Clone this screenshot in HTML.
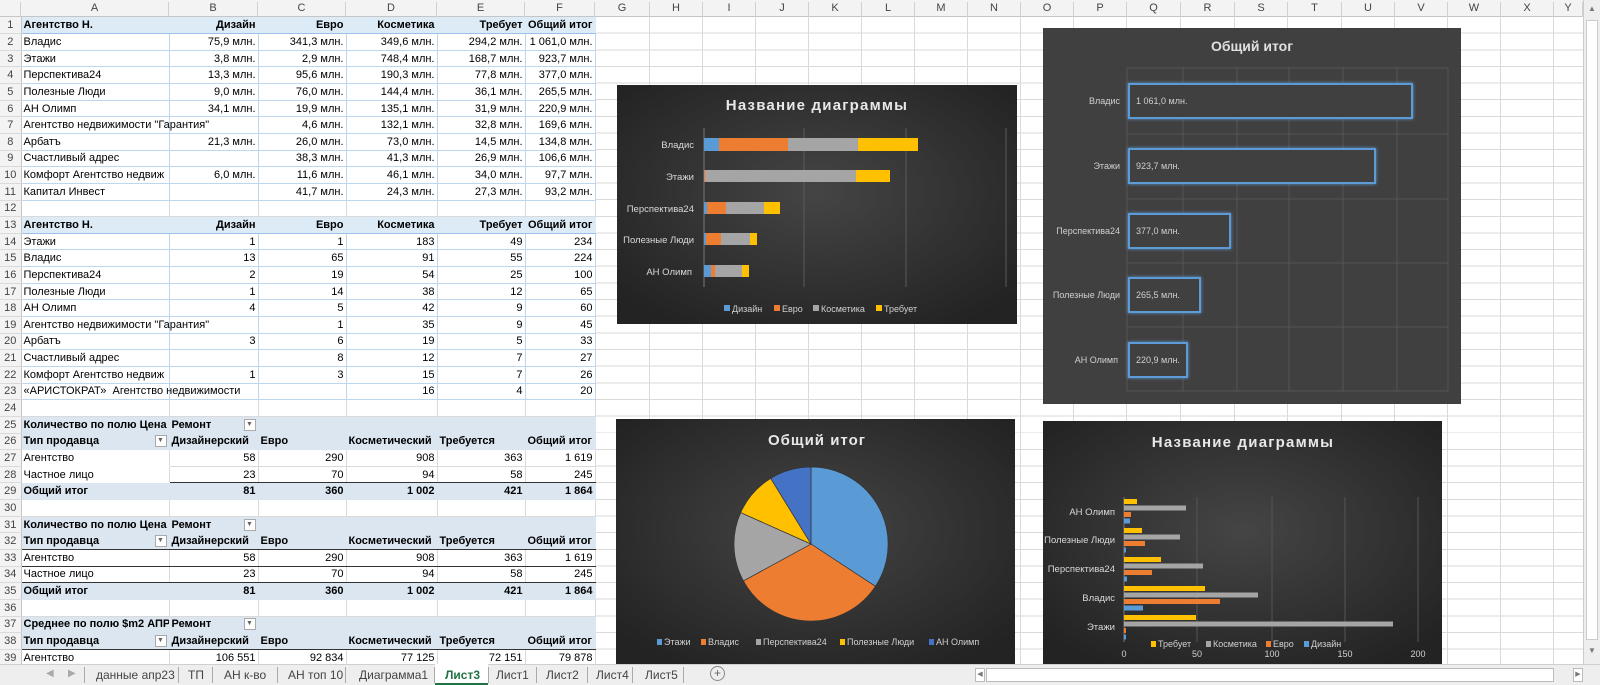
<!DOCTYPE html>
<html><head><meta charset="utf-8"><style>
*{margin:0;padding:0;box-sizing:border-box}
body{width:1600px;height:685px;overflow:hidden;background:#fff;font-family:"Liberation Sans","DejaVu Sans",sans-serif;font-size:11px;color:#000;position:relative}
#colhdr{position:absolute;left:0;top:0;width:1583px;height:17px;background:#f3f3f3;border-bottom:1px solid #c6c6c6}
#colhdr span{position:absolute;top:2px;text-align:center;color:#444;font-size:11px;border-right:1px solid #d0d0d0;height:15px}
#grid{position:absolute;left:595px;top:17px;width:988px;height:647px;background:repeating-linear-gradient(to bottom,transparent 0,transparent 15.65px,#dadada 15.65px,#dadada 16.65px)}
.vl{position:absolute;top:17px;height:647px;width:1px;background:#dadada}
table{position:absolute;left:0;top:17px;border-collapse:collapse;table-layout:fixed;width:595px}
td{height:16.65px;padding:0 2px;border-right:1px solid #dadada;border-bottom:1px solid #dadada;white-space:nowrap;overflow:visible;text-align:right;line-height:14px;font-size:11px}
td:first-child{background:#f3f3f3;color:#444;text-align:center;border-right:1px solid #c6c6c6;padding:0}
td.l{text-align:left}
.h td:not(:first-child){background:#ddebf7;font-weight:bold;border-bottom:1px solid #9bc2e6;border-right-color:#ddebf7}
.t td:not(:first-child){border-bottom:1px solid #bdd7ee;border-right:1px solid #bdd7ee}
.p td:not(:first-child){background:#dce6f1;font-weight:bold;border-right-color:#dce6f1;border-bottom-color:#dce6f1}
.pb td:not(:first-child){border-bottom:1px solid #333}
.pv td:not(:first-child):not(:nth-child(2)){border-left:1px solid #333}
.ov{overflow:visible;position:relative;z-index:2}
.dd{display:inline-block;width:12px;height:12px;border:1px solid #aaa;background:#fff;vertical-align:middle;float:right;margin-top:1px;font-size:7px;line-height:10px;text-align:center;color:#666;font-weight:normal}
#tabs{position:absolute;left:0;top:664px;width:1600px;height:21px;background:#eeeeee;border-top:1px solid #cfcfcf;font-size:12px;color:#444}
#tabs span{position:absolute;top:3px}
.sep{position:absolute;top:2px;width:1px;height:16px;background:#aaa}
#vs{position:absolute;left:1583px;top:0;width:17px;height:664px;background:#eee;border-left:1px solid #ccc}
</style></head><body>
<div id="colhdr">
<span style="left:0;width:21px"></span>
<span style="left:21px;width:148px">A</span><span style="left:169px;width:89px">B</span><span style="left:258px;width:88px">C</span><span style="left:346px;width:91px">D</span><span style="left:437px;width:88px">E</span><span style="left:525px;width:70px">F</span>
<span style="left:595px;width:55px">G</span><span style="left:650px;width:53px">H</span><span style="left:703px;width:53px">I</span><span style="left:756px;width:53px">J</span><span style="left:809px;width:53px">K</span><span style="left:862px;width:53px">L</span><span style="left:915px;width:53px">M</span><span style="left:968px;width:53px">N</span><span style="left:1021px;width:53px">O</span><span style="left:1074px;width:53px">P</span><span style="left:1127px;width:54px">Q</span><span style="left:1181px;width:54px">R</span><span style="left:1235px;width:53px">S</span><span style="left:1288px;width:54px">T</span><span style="left:1342px;width:53px">U</span><span style="left:1395px;width:53px">V</span><span style="left:1448px;width:53px">W</span><span style="left:1501px;width:53px">X</span><span style="left:1554px;width:29px">Y</span>
</div>
<div id="grid"></div>
<div class="vl" style="left:649px"></div><div class="vl" style="left:702px"></div><div class="vl" style="left:755px"></div><div class="vl" style="left:808px"></div><div class="vl" style="left:861px"></div><div class="vl" style="left:914px"></div><div class="vl" style="left:967px"></div><div class="vl" style="left:1020px"></div><div class="vl" style="left:1073px"></div><div class="vl" style="left:1126px"></div><div class="vl" style="left:1180px"></div><div class="vl" style="left:1234px"></div><div class="vl" style="left:1287px"></div><div class="vl" style="left:1341px"></div><div class="vl" style="left:1394px"></div><div class="vl" style="left:1447px"></div><div class="vl" style="left:1500px"></div><div class="vl" style="left:1553px"></div>
<table>
<colgroup><col style="width:21px"><col style="width:148px"><col style="width:89px"><col style="width:88px"><col style="width:91px"><col style="width:88px"><col style="width:70px"></colgroup>
<tr class="h"><td>1</td><td class="l">Агентство Н.</td><td>Дизайн</td><td>Евро</td><td>Косметика</td><td>Требует</td><td>Общий итог</td></tr>
<tr class="t"><td>2</td><td class="l">Владис</td><td>75,9 млн.</td><td>341,3 млн.</td><td>349,6 млн.</td><td>294,2 млн.</td><td>1 061,0 млн.</td></tr>
<tr class="t"><td>3</td><td class="l">Этажи</td><td>3,8 млн.</td><td>2,9 млн.</td><td>748,4 млн.</td><td>168,7 млн.</td><td>923,7 млн.</td></tr>
<tr class="t"><td>4</td><td class="l">Перспектива24</td><td>13,3 млн.</td><td>95,6 млн.</td><td>190,3 млн.</td><td>77,8 млн.</td><td>377,0 млн.</td></tr>
<tr class="t"><td>5</td><td class="l">Полезные Люди</td><td>9,0 млн.</td><td>76,0 млн.</td><td>144,4 млн.</td><td>36,1 млн.</td><td>265,5 млн.</td></tr>
<tr class="t"><td>6</td><td class="l">АН Олимп</td><td>34,1 млн.</td><td>19,9 млн.</td><td>135,1 млн.</td><td>31,9 млн.</td><td>220,9 млн.</td></tr>
<tr class="t"><td>7</td><td class="l ov">Агентство недвижимости "Гарантия"</td><td></td><td>4,6 млн.</td><td>132,1 млн.</td><td>32,8 млн.</td><td>169,6 млн.</td></tr>
<tr class="t"><td>8</td><td class="l">Арбатъ</td><td>21,3 млн.</td><td>26,0 млн.</td><td>73,0 млн.</td><td>14,5 млн.</td><td>134,8 млн.</td></tr>
<tr class="t"><td>9</td><td class="l">Счастливый адрес</td><td></td><td>38,3 млн.</td><td>41,3 млн.</td><td>26,9 млн.</td><td>106,6 млн.</td></tr>
<tr class="t"><td>10</td><td class="l" style="overflow:hidden">Комфорт Агентство недвиж</td><td>6,0 млн.</td><td>11,6 млн.</td><td>46,1 млн.</td><td>34,0 млн.</td><td>97,7 млн.</td></tr>
<tr class="t"><td>11</td><td class="l">Капитал Инвест</td><td></td><td>41,7 млн.</td><td>24,3 млн.</td><td>27,3 млн.</td><td>93,2 млн.</td></tr>
<tr><td>12</td><td></td><td></td><td></td><td></td><td></td><td></td></tr>
<tr class="h"><td>13</td><td class="l">Агентство Н.</td><td>Дизайн</td><td>Евро</td><td>Косметика</td><td>Требует</td><td>Общий итог</td></tr>
<tr class="t"><td>14</td><td class="l">Этажи</td><td>1</td><td>1</td><td>183</td><td>49</td><td>234</td></tr>
<tr class="t"><td>15</td><td class="l">Владис</td><td>13</td><td>65</td><td>91</td><td>55</td><td>224</td></tr>
<tr class="t"><td>16</td><td class="l">Перспектива24</td><td>2</td><td>19</td><td>54</td><td>25</td><td>100</td></tr>
<tr class="t"><td>17</td><td class="l">Полезные Люди</td><td>1</td><td>14</td><td>38</td><td>12</td><td>65</td></tr>
<tr class="t"><td>18</td><td class="l">АН Олимп</td><td>4</td><td>5</td><td>42</td><td>9</td><td>60</td></tr>
<tr class="t"><td>19</td><td class="l ov">Агентство недвижимости "Гарантия"</td><td></td><td>1</td><td>35</td><td>9</td><td>45</td></tr>
<tr class="t"><td>20</td><td class="l">Арбатъ</td><td>3</td><td>6</td><td>19</td><td>5</td><td>33</td></tr>
<tr class="t"><td>21</td><td class="l">Счастливый адрес</td><td></td><td>8</td><td>12</td><td>7</td><td>27</td></tr>
<tr class="t"><td>22</td><td class="l" style="overflow:hidden">Комфорт Агентство недвиж</td><td>1</td><td>3</td><td>15</td><td>7</td><td>26</td></tr>
<tr class="t"><td>23</td><td class="l ov">«АРИСТОКРАТ»&nbsp; Агентство недвижимости</td><td></td><td></td><td>16</td><td>4</td><td>20</td></tr>
<tr><td>24</td><td></td><td></td><td></td><td></td><td></td><td></td></tr>
<tr class="p"><td>25</td><td class="l">Количество по полю Цена</td><td class="l">Ремонт <span class="dd">▼</span></td><td></td><td></td><td></td><td></td></tr>
<tr class="p pv"><td>26</td><td class="l">Тип продавца <span class="dd">▼</span></td><td class="l">Дизайнерский</td><td class="l">Евро</td><td class="l">Косметический</td><td class="l">Требуется</td><td class="l">Общий итог</td></tr>
<tr class="pv"><td>27</td><td class="l" style="border-bottom-color:#fff">Агентство</td><td>58</td><td>290</td><td>908</td><td>363</td><td>1 619</td></tr>
<tr class="pv pb"><td>28</td><td class="l" style="border-bottom-color:#fff">Частное лицо</td><td>23</td><td>70</td><td>94</td><td>58</td><td>245</td></tr>
<tr class="p pv"><td>29</td><td class="l">Общий итог</td><td>81</td><td>360</td><td>1 002</td><td>421</td><td>1 864</td></tr>
<tr><td>30</td><td></td><td></td><td></td><td></td><td></td><td></td></tr>
<tr class="p"><td>31</td><td class="l">Количество по полю Цена</td><td class="l">Ремонт <span class="dd">▼</span></td><td></td><td></td><td></td><td></td></tr>
<tr class="p pv pb"><td>32</td><td class="l">Тип продавца <span class="dd">▼</span></td><td class="l">Дизайнерский</td><td class="l">Евро</td><td class="l">Косметический</td><td class="l">Требуется</td><td class="l">Общий итог</td></tr>
<tr class="pv pb"><td>33</td><td class="l">Агентство</td><td>58</td><td>290</td><td>908</td><td>363</td><td>1 619</td></tr>
<tr class="pv pb"><td>34</td><td class="l">Частное лицо</td><td>23</td><td>70</td><td>94</td><td>58</td><td>245</td></tr>
<tr class="p pv"><td>35</td><td class="l">Общий итог</td><td>81</td><td>360</td><td>1 002</td><td>421</td><td>1 864</td></tr>
<tr><td>36</td><td></td><td></td><td></td><td></td><td></td><td></td></tr>
<tr class="p"><td>37</td><td class="l" style="overflow:hidden">Среднее по полю $m2 АПР</td><td class="l">Ремонт <span class="dd">▼</span></td><td></td><td></td><td></td><td></td></tr>
<tr class="p pv pb"><td>38</td><td class="l">Тип продавца <span class="dd">▼</span></td><td class="l">Дизайнерский</td><td class="l">Евро</td><td class="l">Косметический</td><td class="l">Требуется</td><td class="l">Общий итог</td></tr>
<tr class="pv"><td>39</td><td class="l">Агентство</td><td>106 551</td><td>92 834</td><td>77 125</td><td>72 151</td><td>79 878</td></tr>
</table>

<svg width="1600" height="685" style="position:absolute;left:0;top:0" font-family="Liberation Sans, DejaVu Sans, sans-serif">
<defs>
<radialGradient id="rg" cx="50%" cy="45%" r="65%"><stop offset="0" stop-color="#454545"/><stop offset="1" stop-color="#232323"/></radialGradient>
<filter id="glow" x="-10%" y="-30%" width="120%" height="160%"><feGaussianBlur stdDeviation="1.5" result="b"/><feMerge><feMergeNode in="b"/><feMergeNode in="SourceGraphic"/></feMerge></filter>
</defs>
<!-- Chart 1 -->
<rect x="617" y="85" width="400" height="239" fill="url(#rg)"/>
<text x="817" y="110" fill="#e8e8e8" font-size="15" font-weight="bold" text-anchor="middle" letter-spacing="1.2">Название диаграммы</text>
<g stroke="#5a5a5a" stroke-width="1"><line x1="704" y1="128" x2="704" y2="287" stroke="#777"/><line x1="804" y1="128" x2="804" y2="287"/><line x1="906" y1="128" x2="906" y2="287"/><line x1="1006" y1="128" x2="1006" y2="287"/></g>
<g fill="#d9d9d9" font-size="9.5" text-anchor="end">
<text x="694" y="148">Владис</text><text x="694" y="180">Этажи</text><text x="694" y="212">Перспектива24</text><text x="694" y="243">Полезные Люди</text><text x="692" y="275">АН Олимп</text></g>
<rect x="704" y="138" width="15" height="13" fill="#5b9bd5"/><rect x="719" y="138" width="69" height="13" fill="#ed7d31"/><rect x="788" y="138" width="70" height="13" fill="#a5a5a5"/><rect x="858" y="138" width="60" height="13" fill="#ffc000"/>
<rect x="704" y="170" width="1" height="12" fill="#ed7d31"/><rect x="705" y="170" width="151" height="12" fill="#a5a5a5"/><rect x="856" y="170" width="34" height="12" fill="#ffc000"/>
<rect x="704" y="202" width="3" height="12" fill="#5b9bd5"/><rect x="707" y="202" width="19" height="12" fill="#ed7d31"/><rect x="726" y="202" width="38" height="12" fill="#a5a5a5"/><rect x="764" y="202" width="16" height="12" fill="#ffc000"/>
<rect x="704" y="233" width="2" height="12" fill="#5b9bd5"/><rect x="706" y="233" width="15" height="12" fill="#ed7d31"/><rect x="721" y="233" width="29" height="12" fill="#a5a5a5"/><rect x="750" y="233" width="7" height="12" fill="#ffc000"/>
<rect x="704" y="265" width="7" height="12" fill="#5b9bd5"/><rect x="711" y="265" width="4" height="12" fill="#ed7d31"/><rect x="715" y="265" width="27" height="12" fill="#a5a5a5"/><rect x="742" y="265" width="7" height="12" fill="#ffc000"/>
<g font-size="9" fill="#d0d0d0"><rect x="724" y="305" width="6" height="6" fill="#5b9bd5"/><text x="732" y="312">Дизайн</text><rect x="774" y="305" width="6" height="6" fill="#ed7d31"/><text x="782" y="312">Евро</text><rect x="813" y="305" width="6" height="6" fill="#a5a5a5"/><text x="821" y="312">Косметика</text><rect x="876" y="305" width="6" height="6" fill="#ffc000"/><text x="884" y="312">Требует</text></g>

<!-- Chart 2 -->
<rect x="1043" y="28" width="418" height="376" fill="#404040"/>
<text x="1252" y="51" fill="#e0e0e0" font-size="14" font-weight="bold" text-anchor="middle">Общий итог</text>
<g stroke="#555" stroke-width="1">
<line x1="1127" y1="68" x2="1448" y2="68"/><line x1="1127" y1="134" x2="1448" y2="134"/><line x1="1127" y1="199" x2="1448" y2="199"/><line x1="1127" y1="263" x2="1448" y2="263"/><line x1="1127" y1="327" x2="1448" y2="327"/><line x1="1127" y1="391" x2="1448" y2="391"/>
<line x1="1127" y1="68" x2="1127" y2="391"/><line x1="1183" y1="68" x2="1183" y2="391"/><line x1="1237" y1="68" x2="1237" y2="391"/><line x1="1289" y1="68" x2="1289" y2="391"/><line x1="1343" y1="68" x2="1343" y2="391"/><line x1="1397" y1="68" x2="1397" y2="391"/><line x1="1448" y1="68" x2="1448" y2="391"/></g>
<g fill="#404040" stroke="#5b9bd5" stroke-width="2" filter="url(#glow)">
<rect x="1129" y="84" width="283" height="34"/><rect x="1129" y="149" width="246" height="34"/><rect x="1129" y="214" width="101" height="34"/><rect x="1129" y="278" width="71" height="34"/><rect x="1129" y="343" width="58" height="34"/></g>
<g fill="#d0d0d0" font-size="9"><text x="1136" y="104">1 061,0 млн.</text><text x="1136" y="169">923,7 млн.</text><text x="1136" y="234">377,0 млн.</text><text x="1136" y="298">265,5 млн.</text><text x="1136" y="363">220,9 млн.</text></g>
<g fill="#d0d0d0" font-size="9" text-anchor="end"><text x="1120" y="104">Владис</text><text x="1120" y="169">Этажи</text><text x="1120" y="234">Перспектива24</text><text x="1120" y="298">Полезные Люди</text><text x="1118" y="363">АН Олимп</text></g>

<!-- Pie -->
<rect x="616" y="419" width="399" height="245" fill="url(#rg)"/>
<text x="817" y="445" fill="#e8e8e8" font-size="15" font-weight="bold" text-anchor="middle" letter-spacing="1">Общий итог</text>
<g stroke="#333" stroke-width="0.7">
<path d="M811,544 L811,467 A77,77 0 0 1 875.4,586.3 Z" fill="#5b9bd5"/>
<path d="M811,544 L875.4,586.3 A77,77 0 0 1 743.4,580.9 Z" fill="#ed7d31"/>
<path d="M811,544 L743.4,580.9 A77,77 0 0 1 740.7,512.6 Z" fill="#a5a5a5"/>
<path d="M811,544 L740.7,512.6 A77,77 0 0 1 770.7,478.4 Z" fill="#ffc000"/>
<path d="M811,544 L770.7,478.4 A77,77 0 0 1 811,467 Z" fill="#4472c4"/></g>
<g font-size="9" fill="#d0d0d0"><rect x="657" y="639" width="5" height="6" fill="#5b9bd5"/><text x="664" y="645">Этажи</text><rect x="701" y="639" width="5" height="6" fill="#ed7d31"/><text x="708" y="645">Владис</text><rect x="756" y="639" width="5" height="6" fill="#a5a5a5"/><text x="763" y="645">Перспектива24</text><rect x="840" y="639" width="5" height="6" fill="#ffc000"/><text x="847" y="645">Полезные Люди</text><rect x="929" y="639" width="5" height="6" fill="#4472c4"/><text x="936" y="645">АН Олимп</text></g>

<!-- Chart 4 -->
<rect x="1043" y="421" width="399" height="243" fill="url(#rg)"/>
<text x="1243" y="447" fill="#e8e8e8" font-size="15" font-weight="bold" text-anchor="middle" letter-spacing="1.2">Название диаграммы</text>
<g stroke="#555"><line x1="1197" y1="497" x2="1197" y2="642"/><line x1="1272" y1="497" x2="1272" y2="642"/><line x1="1345" y1="497" x2="1345" y2="642"/><line x1="1418" y1="497" x2="1418" y2="642"/><line x1="1124" y1="497" x2="1124" y2="642" stroke="#777"/></g>
<g fill="#d9d9d9" font-size="9.5" text-anchor="end"><text x="1115" y="515">АН Олимп</text><text x="1115" y="543">Полезные Люди</text><text x="1115" y="572">Перспектива24</text><text x="1115" y="601">Владис</text><text x="1115" y="630">Этажи</text></g>
<g>
<rect x="1124" y="499" width="13" height="5" fill="#ffc000"/><rect x="1124" y="505.5" width="62" height="5" fill="#a5a5a5"/><rect x="1124" y="512" width="7" height="5" fill="#ed7d31"/><rect x="1124" y="518.5" width="6" height="5" fill="#5b9bd5"/>
<rect x="1124" y="528" width="18" height="5" fill="#ffc000"/><rect x="1124" y="534.5" width="56" height="5" fill="#a5a5a5"/><rect x="1124" y="541" width="21" height="5" fill="#ed7d31"/><rect x="1124" y="547.5" width="2" height="5" fill="#5b9bd5"/>
<rect x="1124" y="557" width="37" height="5" fill="#ffc000"/><rect x="1124" y="563.5" width="79" height="5" fill="#a5a5a5"/><rect x="1124" y="570" width="28" height="5" fill="#ed7d31"/><rect x="1124" y="576.5" width="3" height="5" fill="#5b9bd5"/>
<rect x="1124" y="586" width="81" height="5" fill="#ffc000"/><rect x="1124" y="592.5" width="134" height="5" fill="#a5a5a5"/><rect x="1124" y="599" width="96" height="5" fill="#ed7d31"/><rect x="1124" y="605.5" width="19" height="5" fill="#5b9bd5"/>
<rect x="1124" y="615" width="72" height="5" fill="#ffc000"/><rect x="1124" y="621.5" width="269" height="5" fill="#a5a5a5"/><rect x="1124" y="628" width="2" height="5" fill="#ed7d31"/><rect x="1124" y="634.5" width="2" height="5" fill="#5b9bd5"/></g>
<g font-size="9" fill="#d0d0d0"><rect x="1151" y="641" width="5" height="6" fill="#ffc000"/><text x="1158" y="647">Требует</text><rect x="1206" y="641" width="5" height="6" fill="#a5a5a5"/><text x="1213" y="647">Косметика</text><rect x="1266" y="641" width="5" height="6" fill="#ed7d31"/><text x="1273" y="647">Евро</text><rect x="1304" y="641" width="5" height="6" fill="#5b9bd5"/><text x="1311" y="647">Дизайн</text></g>
<g font-size="9" fill="#d0d0d0" text-anchor="middle"><text x="1124" y="657">0</text><text x="1197" y="657">50</text><text x="1272" y="657">100</text><text x="1345" y="657">150</text><text x="1418" y="657">200</text></g>
</svg>

<div id="vs"><div style="position:absolute;left:2px;top:20px;width:12px;height:620px;background:#fff;border:1px solid #ccc"></div><div style="position:absolute;left:4px;top:4px;font-size:8px;color:#777">▲</div><div style="position:absolute;left:4px;top:646px;font-size:8px;color:#777">▼</div></div>
<div id="tabs">
<span style="left:46px;color:#aaa;font-size:10px">◀</span><span style="left:68px;color:#aaa;font-size:10px">▶</span>
<div class="sep" style="left:84px"></div>
<span style="left:96px">данные апр23</span><div class="sep" style="left:178px"></div>
<span style="left:188px">ТП</span><div class="sep" style="left:212px"></div>
<span style="left:224px">АН к-во</span><div class="sep" style="left:277px"></div>
<span style="left:288px">АН топ 10</span><div class="sep" style="left:345px"></div>
<span style="left:359px">Диаграмма1</span><div class="sep" style="left:434px"></div>
<div style="position:absolute;left:435px;top:-1px;width:53px;height:21px;background:#fff;border-bottom:2px solid #217346"></div>
<span style="left:445px;color:#217346;font-weight:bold">Лист3</span><div class="sep" style="left:488px"></div>
<span style="left:496px">Лист1</span><div class="sep" style="left:536px"></div>
<span style="left:546px">Лист2</span><div class="sep" style="left:587px"></div>
<span style="left:596px">Лист4</span><div class="sep" style="left:632px"></div>
<span style="left:645px">Лист5</span><div class="sep" style="left:683px"></div>
<span style="left:710px;top:1px;width:15px;height:15px;border:1px solid #888;border-radius:50%;text-align:center;line-height:13px;color:#666">+</span>
<div style="position:absolute;left:975px;top:3px;width:10px;height:14px;border:1px solid #bbb;background:#fff;font-size:7px;color:#777;text-align:center;line-height:12px">◀</div>
<div style="position:absolute;left:986px;top:3px;width:568px;height:14px;border:1px solid #bbb;background:#fff"></div>
<div style="position:absolute;left:1573px;top:3px;width:10px;height:14px;border:1px solid #bbb;background:#fff;font-size:7px;color:#777;text-align:center;line-height:12px">▶</div>
</div>
</body></html>
